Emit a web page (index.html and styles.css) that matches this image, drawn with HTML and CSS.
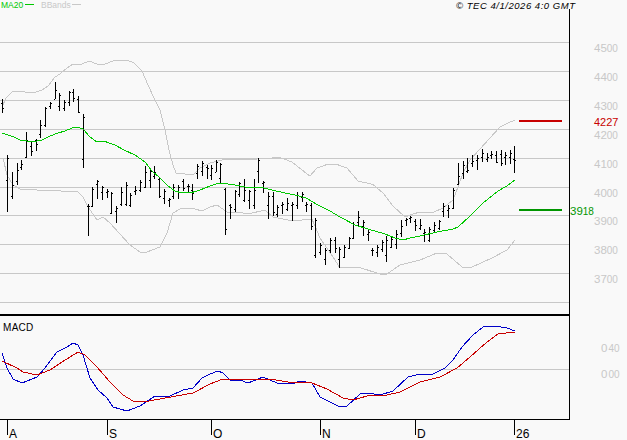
FILE: index.html
```html
<!DOCTYPE html>
<html lang="en">
<head>
<meta charset="utf-8">
<title>TEC chart</title>
<link rel="stylesheet" href="styles.css">
</head>
<body>
<main class="chart">
<svg class="plot" viewBox="0 0 627 440" width="627" height="440" xmlns="http://www.w3.org/2000/svg">
  <path class="grid" d="M0 42.5H569M0 71.5H569M0 100.5H569M0 129.5H569M0 158.5H569M0 187.5H569M0 215.5H569M0 244.5H569M0 273.5H569M0 302.5H569M0 369.5H569"/>

  <polyline class="band" points="2,107 6,98 12,92 18,91 25,92 35,92.5 42,90 48,86 55,77 60,74 67,68 73,64 82,64 89,61 97,64 103,65 110,62 116,60 127,60 134,63 142,71 148,85 155,100 160,110 165,130 169,150 173,165 176,173 193,175 200,168 210,163 222,160 230,159 240,160 250,159.5 280,157.5 292,162 302,170 310,176 317,168 327,164.5 337,164.5 347,168 358,181 373,184.5 383,193 393,206 405,217 413,214 420,212 433,212.5 443,208 453,200 458,187 463,173 470,160 480,149 490,138 500,127 510,122 515,120.5"/>
  <polyline class="band" points="3,158 7,175 13,185 20,189 37,190 53,190.7 78,191.7 83,197 88,207 97,220 103,217 110,223 130,245 140,252 147,252 160,247 167,233 173,213 182,208 195,209 202,211 210,207 217,205 227,212 238,212 248,214 265,210 273,217 293,221 312,219 320,238 333,257 340,268 358,267 380,274 387,274 400,265 420,260 437,253 447,254 462,267 472,267 492,258 507,250 515,240"/>

  <path class="bars" d="M2.5 99V113M1 103H2M3 108H4M7.5 155V212M6 180H7M8 158H9M12.5 172V199M11 196H12M13 185H14M17.5 163V185M16 181H17M18 170H19M21.5 160V170M20 167H21M22 164H23M26.5 132V158M25 157H26M27 140H28M31.5 142V156M30 146H31M32 151H33M36.5 139V151M35 140H36M37 144H38M40.5 120V138M39 134H40M41 125H42M45.5 107V127M44 125H45M46 108H47M50.5 102V109M49 106H50M51 103H52M55.5 82V99M54 99H55M56 90H57M59.5 93V111M58 106H59M60 95H61M64.5 100V111M63 108H64M65 102H66M69.5 91V106M68 102H69M70 92H71M73.5 89V102M72 92H73M74 98H75M78.5 96V113M77 99H78M79 112H80M83.5 114V168M82 159H83M84 117H85M88.5 204V236M87 206H88M89 206H90M92.5 187V207M91 206H92M93 189H94M97 179.5V199M95.5 184H96.5M97.5 181H98.5M102 185.5V200M100.5 192H101.5M102.5 187H103.5M107 188.5V198M105.5 192H106.5M107.5 191H108.5M111.5 192V214M110 213H111M112 193H113M116 206V223M114.5 211H115.5M116.5 208H117.5M121 187V206M119.5 204H120.5M121.5 192H122.5M126 182V206M124.5 204H125.5M126.5 185H127.5M130.5 193V207M129 205H130M131 195H132M135.5 186V195M134 191H135M136 190H137M140 180V192M138.5 190H139.5M140.5 182H141.5M145.5 166V188M144 187H145M146 172H147M150 170V188M148.5 180H149.5M150.5 171H151.5M154.5 166V179M153 176H154M155 172H156M159.5 178V198M158 179H159M160 196H161M164 189V204M162.5 198H163.5M164.5 191H165.5M169 198V207M167.5 200H168.5M169.5 199H170.5M173.5 184V199M172 196H173M174 187H175M178.5 185V199M177 191H178M179 187H180M183 179V191M181.5 181H182.5M183.5 188H184.5M188 184V192M186.5 186H187.5M188.5 186H189.5M192.5 184V200M191 190H192M193 193H194M197.5 164V179M196 173H197M198 166H199M202 161V176M200.5 171H201.5M202.5 163H203.5M207 165V179M205.5 167H206.5M207.5 168H208.5M211.5 165V180M210 175H211M212 168H213M216.5 160V172M215 172H216M217 162H218M220.5 163V184M219 178H220M221 164H222M225.5 188V235M224 189H225M226 229H227M230.5 204V219M229 205H230M231 207H232M235.5 190V212M234 209H235M236 191H237M239.5 182V197M238 194H239M240 183H241M244.5 179V202M243 200H244M245 190H246M249.5 190V209M248 200H249M250 191H251M254 179V209M252.5 205H253.5M254.5 190H255.5M258.5 158V183M257 171H258M259 160H260M263 181V193M261.5 183H262.5M263.5 182H264.5M268 192V219M266.5 205H267.5M268.5 196H269.5M273 192V216M271.5 196H272.5M273.5 212H274.5M277 205V217M275.5 214H276.5M277.5 207H278.5M282 202V214M280.5 205H281.5M282.5 204H283.5M287 198V211M285.5 209H286.5M287.5 203H288.5M292 202V221M290.5 205H291.5M292.5 204H293.5M297 192V209M295.5 205H296.5M297.5 195H298.5M302 192V202M300.5 197H301.5M302.5 194H303.5M306.5 202V212M305 205H306M307 204H308M311 203V230M309.5 205H310.5M311.5 226H312.5M315.5 218V258M314 255H315M316 220H317M320 243V255M318.5 252H319.5M320.5 245H321.5M325 248V265M323.5 259H324.5M325.5 250H326.5M330 238V253M328.5 250H329.5M330.5 240H331.5M335 237V253M333.5 240H334.5M335.5 248H336.5M339 247V268M337.5 259H338.5M339.5 249H340.5M344 245V258M342.5 257H343.5M344.5 247H345.5M349 237V249M347.5 248H348.5M349.5 238H350.5M353.5 222V239M352 238H353M354 224H355M358.5 211V226M357 222H358M359 217H360M363 220V236M361.5 226H362.5M363.5 222H364.5M368 230V241M366.5 234H367.5M368.5 232H369.5M372.5 248V256M371 250H372M373 250H374M377 245V257M375.5 252H376.5M377.5 247H378.5M382 240V252M380.5 249H381.5M382.5 242H383.5M386.5 236V262M385 255H386M387 240H388M391 237V248M389.5 247H390.5M391.5 239H392.5M396.5 230V249M395 244H396M397 234H398M401 220V237M399.5 233H400.5M401.5 226H402.5M406 218V226M404.5 220H405.5M406.5 219H407.5M410.5 216V223M409 218H410M411 217H412M415 219V231M413.5 221H414.5M415.5 225H416.5M420 219V230M418.5 228H419.5M420.5 225H421.5M424.5 229V242M423 233H424M425 232H426M429 227V242M427.5 240H428.5M429.5 229H430.5M434 222V233M432.5 230H433.5M434.5 225H435.5M439 220V230M437.5 228H438.5M439.5 221H440.5M443.5 203V217M442 211H443M444 206H445M448 205V218M446.5 210H447.5M448.5 208H449.5M453 188V209M451.5 208H452.5M453.5 190H454.5M458 163V185M456.5 184H457.5M458.5 176H459.5M463 161V179M461.5 173H462.5M463.5 165H464.5M467.5 158V173M466 171H467M468 170H469M472 155V167M470.5 163H471.5M472.5 161H473.5M477 155V170M475.5 160H476.5M477.5 158H478.5M482 149V162M480.5 157H481.5M482.5 153H483.5M487 153V162M485.5 159H486.5M487.5 157H488.5M491.5 151V159M490 155H491M492 154H493M496 151V163M494.5 155H495.5M496.5 162H497.5M501 150V166M499.5 154H500.5M501.5 163H502.5M505.5 152V165M504 157H505M506 155H507M510 150V164M508.5 157H509.5M510.5 153H511.5M514.5 146V173M513 159H514M515 160H516"/>

  <polyline class="ma" points="2,133 8,135 14,137 20,140 27,141 35,141.5 42,140 50,136 58,133 65,131 72,128 78,127.5 83,129 90,137 97,142 105,141.5 115,145 124,150 135,155 145,162 152,171 160,178 168,186 175,191 182,193 192,192.5 200,190 210,186 216,184 225,183.5 235,185 245,187 250,188 260,187 272,190 285,193 295,195 306,198 318,205 330,211 340,217 355,225 368,229 385,234 395,238 403,240 410,238 420,236 437,232 453,229 458,227 470,216 483,203 498,191 507,186 515,180"/>

  <rect class="level-red" x="519" y="120" width="43" height="2"/>
  <rect class="level-green" x="519" y="209" width="43" height="2"/>

  <polyline class="macd" points="2,353 7,368 13,379 22,383 37,377 45,368 57,352 67,347 73,343 78,345 83,355 90,378 98,390 107,398 113,407 127,411 140,406 155,396 170,396 183,390 193,388 202,378 210,374 218,371 223,373 230,380 240,380 248,383 263,377 277,383 292,384 300,381 312,383 320,397 338,406 347,406 360,394 368,393 380,395 393,391 408,377 420,374 433,374 445,368 453,360 462,347 473,335 483,327 495,326 507,328 515,331"/>
  <polyline class="signal" points="2,361 17,368 23,372 37,375 50,370 62,362 78,352 85,355 97,367 110,382 123,395 133,401 143,402 160,399 193,393 210,384 223,379 243,380 270,379 288,382 312,383 327,389 343,398 353,400 367,396 387,395 400,392 420,382 440,377 457,368 470,357 487,342 498,334 515,332"/>

  <path class="axis" d="M569.5 9V420M0 419.5H569M7.5 420V435M107.5 420V435M211.5 420V435M320.5 420V435M415.5 420V435M514.5 420V435"/>
  <rect class="divider" x="0" y="314" width="570" height="2"/>

  <text class="legend legend-ma" x="1" y="8">MA20</text>
  <path class="legend-ma-line" d="M25 4.5H34"/>
  <text class="legend legend-bb" x="41" y="8">BBands</text>
  <path class="legend-bb-line" d="M72 4.5H81"/>
  <text class="stamp" x="456" y="8.5" textLength="119" lengthAdjust="spacing">© TEC 4/1/2026 4:0 GMT</text>

  <text class="scale" x="594" y="51.5">45<tspan class="minor">00</tspan></text>
  <text class="scale" x="594" y="80.5">44<tspan class="minor">00</tspan></text>
  <text class="scale" x="594" y="109.5">43<tspan class="minor">00</tspan></text>
  <text class="scale" x="594" y="138.5">42<tspan class="minor">00</tspan></text>
  <text class="scale" x="594" y="167.5">41<tspan class="minor">00</tspan></text>
  <text class="scale" x="594" y="196.5">40<tspan class="minor">00</tspan></text>
  <text class="scale" x="594" y="224.5">39<tspan class="minor">00</tspan></text>
  <text class="scale" x="594" y="253.5">38<tspan class="minor">00</tspan></text>
  <text class="scale" x="594" y="282.5">37<tspan class="minor">00</tspan></text>

  <text class="price-red" x="594" y="126">4227</text>
  <text class="price-green" x="570" y="215">39<tspan class="minor">18</tspan></text>

  <text class="macd-title" x="3" y="331">MACD</text>
  <text class="scale" x="601" y="352">0<tspan class="minor" dx="1">40</tspan></text>
  <text class="scale" x="601" y="378">0<tspan class="minor" dx="1">00</tspan></text>

  <text class="month" x="9" y="438">A</text>
  <text class="month" x="109" y="438">S</text>
  <text class="month" x="213" y="438">O</text>
  <text class="month" x="322" y="438">N</text>
  <text class="month" x="417" y="438">D</text>
  <text class="month" x="516" y="438">26</text>
</svg>
</main>
</body>
</html>
```

FILE: styles.css
```css
html, body {
  margin: 0;
  padding: 0;
  background: #f9f9f9;
  overflow: hidden;
}

.chart {
  width: 627px;
  height: 440px;
}

.plot {
  display: block;
  font-family: "Liberation Sans", Arial, sans-serif;
}

.grid {
  fill: none;
  stroke: #c8c8c8;
  stroke-width: 1;
  shape-rendering: crispEdges;
}

.band, .ma, .macd, .signal {
  fill: none;
  stroke-width: 1;
  shape-rendering: crispEdges;
}

.band { stroke: #c8c8c8; }
.ma { stroke: #00c800; }
.macd { stroke: #0000c8; }
.signal { stroke: #c80000; }

.bars, .axis {
  fill: none;
  stroke: #000;
  stroke-width: 1;
  shape-rendering: crispEdges;
}

.divider { fill: #000; }
.level-red { fill: #c80000; }
.level-green { fill: #009600; }

.legend { font-size: 8.5px; }
.legend-ma { fill: #00c800; }
.legend-bb { fill: #c8c8c8; }

.legend-ma-line, .legend-bb-line {
  fill: none;
  stroke-width: 1;
  shape-rendering: crispEdges;
}

.legend-ma-line { stroke: #00c800; }
.legend-bb-line { stroke: #c8c8c8; }

.stamp {
  font-size: 9.5px;
  font-style: italic;
  fill: #000;
}

.scale {
  font-size: 11.5px;
  fill: #c8c8c8;
}

.minor { font-size: 10px; }

.price-red {
  font-size: 11px;
  fill: #c80000;
}

.price-green {
  font-size: 11.5px;
  fill: #009600;
}

.macd-title {
  font-size: 10px;
  letter-spacing: 0.3px;
  fill: #000;
}

.month {
  font-size: 12px;
  fill: #000;
}
```
